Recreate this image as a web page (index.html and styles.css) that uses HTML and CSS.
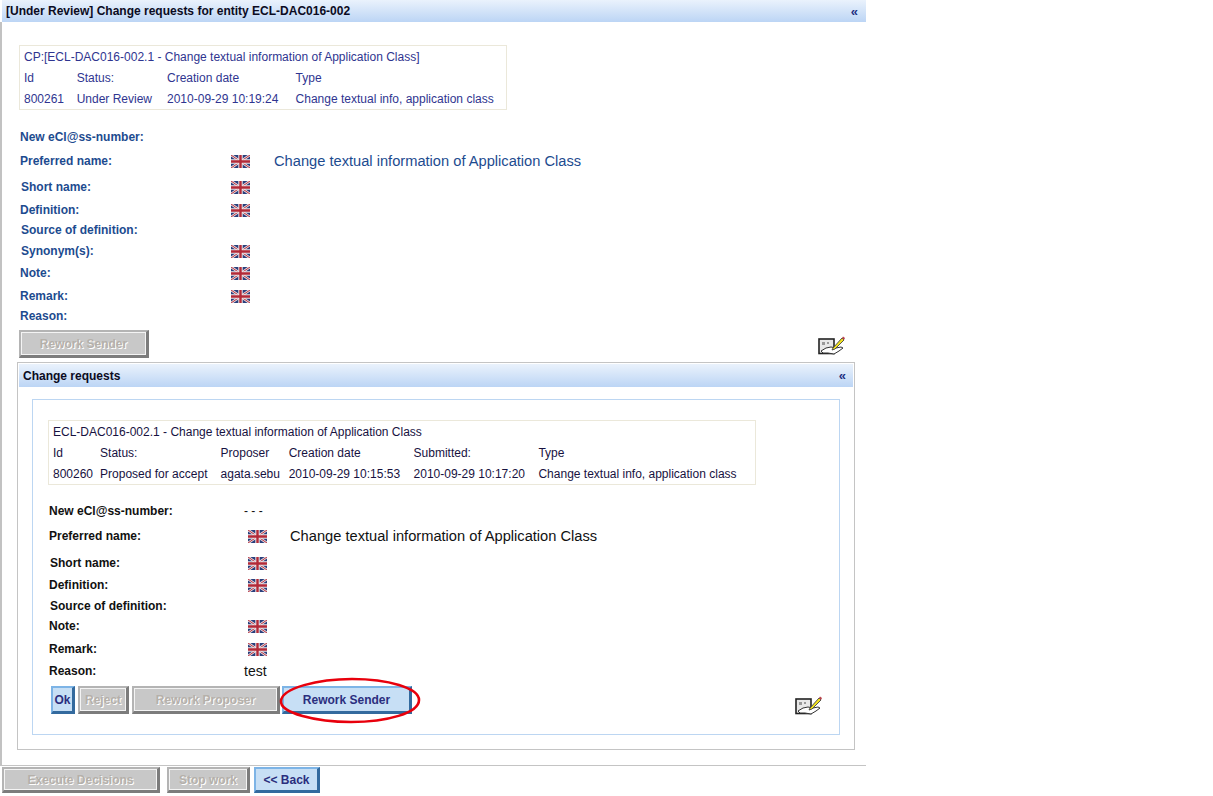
FILE: index.html
```html
<!DOCTYPE html>
<html lang="en">
<head>
<meta charset="utf-8">
<title>Change requests</title>
<link rel="stylesheet" href="styles.css">
</head>
<body>
<svg class="defs" width="0" height="0" aria-hidden="true">
  <defs>
    <symbol id="uk" viewBox="0 0 19 13">
      <rect width="19" height="13" fill="#2a3f7c"/>
      <path d="M0 0L19 13M19 0L0 13" stroke="#e8e0e4" stroke-width="2.6"/>
      <path d="M0 0L19 13M19 0L0 13" stroke="#b8323f" stroke-width="1"/>
      <path d="M9.5 0V13M0 6.5H19" stroke="#eee6e8" stroke-width="4.4"/>
      <path d="M9.5 0V13M0 6.5H19" stroke="#b32a38" stroke-width="2.4"/>
    </symbol>
    <symbol id="sign" viewBox="0 0 28 20">
      <rect x="1" y="4" width="15" height="14.5" fill="#e8e8e8" stroke="#222" stroke-width="1.6"/>
      <path d="M4 7h3v3H4zM9 7h2v2H9z" fill="#999"/>
      <path d="M3 16l5-3 5-1 5 1 5-1 2 1-4 3-5 3-6-1-5 0z" fill="#fff" stroke="#333" stroke-width="1"/>
      <path d="M15 13L24 3l2 2-9 9-3 1z" fill="#f2e21c" stroke="#444" stroke-width="0.9"/>
      <path d="M24 3l1-1.500 2 1.500-1 2z" fill="#b8434a"/>
    </symbol>
  </defs>
</svg>
<div class="page">
  <header class="bar bar-main">
    <span>[Under Review] Change requests for entity ECL-DAC016-002</span>
    <span class="collapse">«</span>
  </header>
  <main class="main">
    <table class="info info-top">
      <tr><td colspan="4">CP:[ECL-DAC016-002.1 - Change textual information of Application Class]</td></tr>
      <tr><td>Id</td><td>Status:</td><td>Creation date</td><td>Type</td></tr>
      <tr><td>800261</td><td>Under Review</td><td>2010-09-29 10:19:24</td><td>Change textual info, application class</td></tr>
    </table>
    <div class="form form-top">
      <div class="lbl">New eCl@ss-number:</div><div></div><div></div>
      <div class="lbl">Preferred name:</div><div class="flag"><svg><use href="#uk"/></svg></div><div class="val">Change textual information of Application Class</div>
      <div class="lbl in1">Short name:</div><div class="flag"><svg><use href="#uk"/></svg></div><div></div>
      <div class="lbl">Definition:</div><div class="flag"><svg><use href="#uk"/></svg></div><div></div>
      <div class="lbl in1">Source of definition:</div><div></div><div></div>
      <div class="lbl in1">Synonym(s):</div><div class="flag"><svg><use href="#uk"/></svg></div><div></div>
      <div class="lbl">Note:</div><div class="flag"><svg><use href="#uk"/></svg></div><div></div>
      <div class="lbl">Remark:</div><div class="flag"><svg><use href="#uk"/></svg></div><div></div>
      <div class="lbl">Reason:</div><div></div><div></div>
    </div>
    <div class="actions actions-top">
      <button class="btn off w-sender" disabled>Rework Sender</button>
      <svg class="sign sign-top"><use href="#sign"/></svg>
    </div>
    <section class="panel">
      <div class="bar bar-sub">
        <span>Change requests</span>
        <span class="collapse">«</span>
      </div>
      <div class="inner">
        <table class="info info-low">
          <tr><td colspan="6">ECL-DAC016-002.1 - Change textual information of Application Class</td></tr>
          <tr><td>Id</td><td>Status:</td><td>Proposer</td><td>Creation date</td><td>Submitted:</td><td>Type</td></tr>
          <tr><td>800260</td><td>Proposed for accept</td><td>agata.sebu</td><td>2010-09-29 10:15:53</td><td>2010-09-29 10:17:20</td><td>Change textual info, application class</td></tr>
        </table>
        <div class="form form-low">
          <div class="lbl">New eCl@ss-number:</div><div class="plain">- - -</div><div></div>
          <div class="lbl">Preferred name:</div><div class="flag"><svg><use href="#uk"/></svg></div><div class="val">Change textual information of Application Class</div>
          <div class="lbl in1">Short name:</div><div class="flag"><svg><use href="#uk"/></svg></div><div></div>
          <div class="lbl">Definition:</div><div class="flag"><svg><use href="#uk"/></svg></div><div></div>
          <div class="lbl in1">Source of definition:</div><div></div><div></div>
          <div class="lbl">Note:</div><div class="flag"><svg><use href="#uk"/></svg></div><div></div>
          <div class="lbl">Remark:</div><div class="flag"><svg><use href="#uk"/></svg></div><div></div>
          <div class="lbl">Reason:</div><div class="plain big">test</div><div></div>
        </div>
        <div class="actions actions-low">
          <button class="btn on w-ok">Ok</button>
          <button class="btn off w-reject" disabled>Reject</button>
          <button class="btn off w-proposer" disabled>Rework Proposer</button>
          <span class="marked">
            <button class="btn on w-sender">Rework Sender</button>
            <svg class="ring" viewBox="0 0 144 47"><path d="M3 24C4 11 40 2 74 2c36 0 67 9 67 21 0 13-32 22-68 22C38 45 2 36 3 24z" fill="none" stroke="#e8000c" stroke-width="2.600"/></svg>
          </span>
          <svg class="sign sign-low"><use href="#sign"/></svg>
        </div>
      </div>
    </section>
  </main>
  <footer class="foot">
    <button class="btn off w-exec" disabled>Execute Decisions</button>
    <button class="btn off w-stop" disabled>Stop work</button>
    <button class="btn on w-back">&lt;&lt; Back</button>
  </footer>
</div>
</body>
</html>
```

FILE: styles.css
```css
* { box-sizing: border-box; }
html, body { margin: 0; padding: 0; background: #fff; }
body { font-family: "Liberation Sans", Arial, sans-serif; font-size: 12px; color: #111; overflow: hidden; }
.defs { position: absolute; }
.page { width: 866px; }

.bar { display: flex; justify-content: space-between; align-items: center; background: linear-gradient(#eaf2fc, #bcd5f5); color: #0b0b22; font-weight: bold; }
.bar-main { height: 22px; margin-left: 2px; padding: 0 8px 0 4px; font-size: 12px; }
.bar-sub { height: 23px; padding: 0 7px 0 4px; }
.collapse { color: #1c2f80; font-size: 13px; }

.main { height: 743px; border-left: 2px solid #c2c2c2; padding: 23px 0 0 17px; }

.info { border: 1px solid #ebe8da; border-collapse: separate; border-spacing: 0; }
.info td { padding: 0 0 0 4px; height: 21px; white-space: nowrap; vertical-align: middle; }
.info td + td { padding-left: 10px; }
.info-top { width: 488px; color: #2f3590; }
.info-low { width: 708px; color: #17123f; margin-left: 15px; }
.info-low td + td { padding-left: 3px; }

.form { display: grid; align-items: center; font-size: 12px; }
.form-top { grid-template-columns: 211px 43px 1fr; grid-template-rows: 20px 28px 24px 22px 18px 24px 20px 26px 14px; margin: 17px 0 0 1px; color: #1d4b8f; }
.form-low { grid-template-columns: 195px 46px 1fr; grid-template-rows: 20px 30px 24px 20px 22px 18px 28px 16px; margin: 16px 0 0 16px; color: #111; }
.lbl { font-weight: bold; white-space: nowrap; }
.in1 { padding-left: 1px; }
.flag { display: flex; align-items: center; }
.flag svg { width: 19px; height: 13px; display: block; }
.form-low .flag { padding-left: 4px; }
.val { font-size: 14.67px; white-space: nowrap; }
.plain { white-space: nowrap; }
.big { font-size: 14px; }

.actions { display: flex; align-items: flex-start; }
.actions-top { margin-top: 7px; height: 32px; }
.actions-low { margin: 7px 0 0 18px; height: 28px; gap: 3px; }
.sign { width: 28px; height: 20px; display: block; }
.sign-top { margin: 5px 0 0 669px; }
.sign-low { margin: 9px 0 0 380px; }

.btn { font: bold 12px "Liberation Sans", Arial, sans-serif; padding: 0; border-style: solid; border-width: 2px 3px 3px 2px; height: 28px; }
.off { background: #c8c8c8; border-color: #b4b4b4 #7c7c7c #7c7c7c #b4b4b4; box-shadow: inset 0 0 0 1px #f4f4f4; color: #b5b0aa; text-shadow: 1px 1px 0 #fff; }
.on { background: #c7dff5; border-color: #7db4e6 #336a9e #336a9e #7db4e6; color: #2b2e7e; }
.w-ok { width: 24px; }
.w-reject { width: 51px; }
.w-proposer { width: 148px; }
.w-sender { width: 130px; }
.marked { position: relative; display: block; margin-left: -1px; height: 28px; }
.ring { position: absolute; left: -4px; top: -9px; width: 144px; height: 47px; overflow: visible; }

.panel { width: 838px; height: 388px; margin-left: -2px; border: 1px solid #c4c4c4; padding: 1px; }
.inner { width: 808px; height: 336px; margin: 12px 0 0 13px; border: 1px solid #bcd6f2; padding-top: 20px; }

.foot { border-top: 1px solid #c4c4c4; padding: 1px 0 0 2px; display: flex; }
.foot .btn { height: 26px; }
.w-exec { width: 158px; margin-right: 7px; }
.w-stop { width: 83px; margin-right: 4px; }
.w-back { width: 66px; }
```
